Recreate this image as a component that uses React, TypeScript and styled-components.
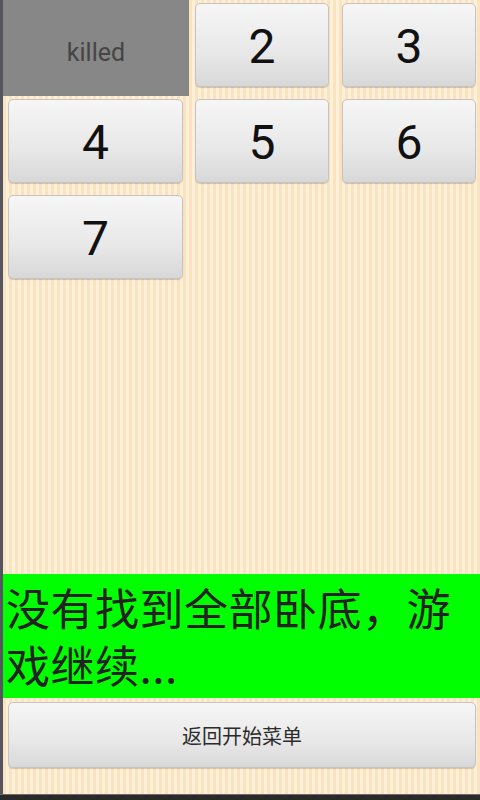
import React from "react";
import styled, { createGlobalStyle } from "styled-components";

const Global = createGlobalStyle`
  html, body { margin: 0; padding: 0; background: #2a2a2e; }
  * { box-sizing: border-box; }
`;

const Screen = styled.div`
  width: 480px;
  height: 800px;
  display: flex;
  flex-direction: column;
  background: #2a2a2a;
  overflow: hidden;
`;

const Content = styled.div`
  flex: 1;
  display: flex;
  flex-direction: column;
  margin-left: 3px;
  box-shadow: -3px 0 0 #55555f;
  background-color: #fde8c6;
  background-image: repeating-linear-gradient(
    90deg,
    #fbe3bf 0px,
    #fbe3bf 3px,
    #fff0d9 3px,
    #fff0d9 6px
  );
`;

const Grid = styled.div`
  display: flex;
  flex-direction: column;
`;

const Row = styled.div`
  display: flex;
  height: 96px;
`;

const Cell = styled.div<{ $w: number; $pr: number; $pl: number }>`
  width: ${(p) => p.$w}px;
  flex: none;
  padding: 3px ${(p) => p.$pr}px 9px ${(p) => p.$pl}px;
  display: flex;
`;

const KilledCell = styled.div<{ $w: number }>`
  width: ${(p) => p.$w}px;
  flex: none;
  background: #878787;
  display: flex;
  align-items: center;
  justify-content: center;
  font-family: Roboto, "Open Sans", sans-serif;
  font-size: 25px;
  color: #454545;
  padding-top: 9px;
`;

const NumButton = styled.button`
  flex: 1;
  margin: 0;
  border: 1px solid #c4c4c4;
  border-radius: 5px;
  background: linear-gradient(180deg, #f6f6f6 0%, #e8e8e8 60%, #d8d8d8 100%);
  box-shadow: 0 1px 1px rgba(0, 0, 0, 0.18);
  font-family: Roboto, "Open Sans", sans-serif;
  font-size: 48px;
  color: #111;
  display: flex;
  align-items: center;
  justify-content: center;
  padding: 2px 0 0 0;
`;

const Spacer = styled.div`
  flex: 1;
`;

const Message = styled.div`
  height: 124px;
  background: #00ff00;
  padding: 5px 0 0 3px;
  font-family: "Noto Sans CJK SC", sans-serif;
  font-size: 44px;
  line-height: 57px;
  color: #222;
  letter-spacing: 0.5px;
  word-break: break-all;
`;

const BottomBar = styled.div`
  height: 96px;
  padding: 4px 4px 26px 5px;
  display: flex;
`;

const MenuButton = styled.button`
  flex: 1;
  margin: 0;
  border: 1px solid #c4c4c4;
  border-radius: 5px;
  background: linear-gradient(180deg, #f6f6f6 0%, #e8e8e8 60%, #d8d8d8 100%);
  box-shadow: 0 1px 1px rgba(0, 0, 0, 0.18);
  font-family: "Noto Sans CJK SC", sans-serif;
  font-size: 20px;
  color: #2c2c2c;
  padding: 0;
`;

const BottomEdge = styled.div`
  height: 6px;
  background: #2a2a2a;
  border-top: 1px solid #6a6a6a;
`;

const cols = [
  { w: 186, pl: 5, pr: 6 },
  { w: 147, pl: 6, pr: 7 },
  { w: 144, pl: 6, pr: 4 },
];

const rows: (string | null)[][] = [
  ["killed", "2", "3"],
  ["4", "5", "6"],
  ["7", null, null],
];

export default function App() {
  return (
    <>
      <Global />
      <Screen>
        <Content>
          <Grid>
            {rows.map((r, ri) => (
              <Row key={ri}>
                {r.map((v, ci) => {
                  const c = cols[ci];
                  if (v === "killed")
                    return (
                      <KilledCell key={ci} $w={c.w}>
                        killed
                      </KilledCell>
                    );
                  return (
                    <Cell key={ci} $w={c.w} $pl={c.pl} $pr={c.pr}>
                      {v !== null && <NumButton>{v}</NumButton>}
                    </Cell>
                  );
                })}
              </Row>
            ))}
          </Grid>
          <Spacer />
          <Message>没有找到全部卧底，游戏继续...</Message>
          <BottomBar>
            <MenuButton>返回开始菜单</MenuButton>
          </BottomBar>
        </Content>
        <BottomEdge />
      </Screen>
    </>
  );
}
